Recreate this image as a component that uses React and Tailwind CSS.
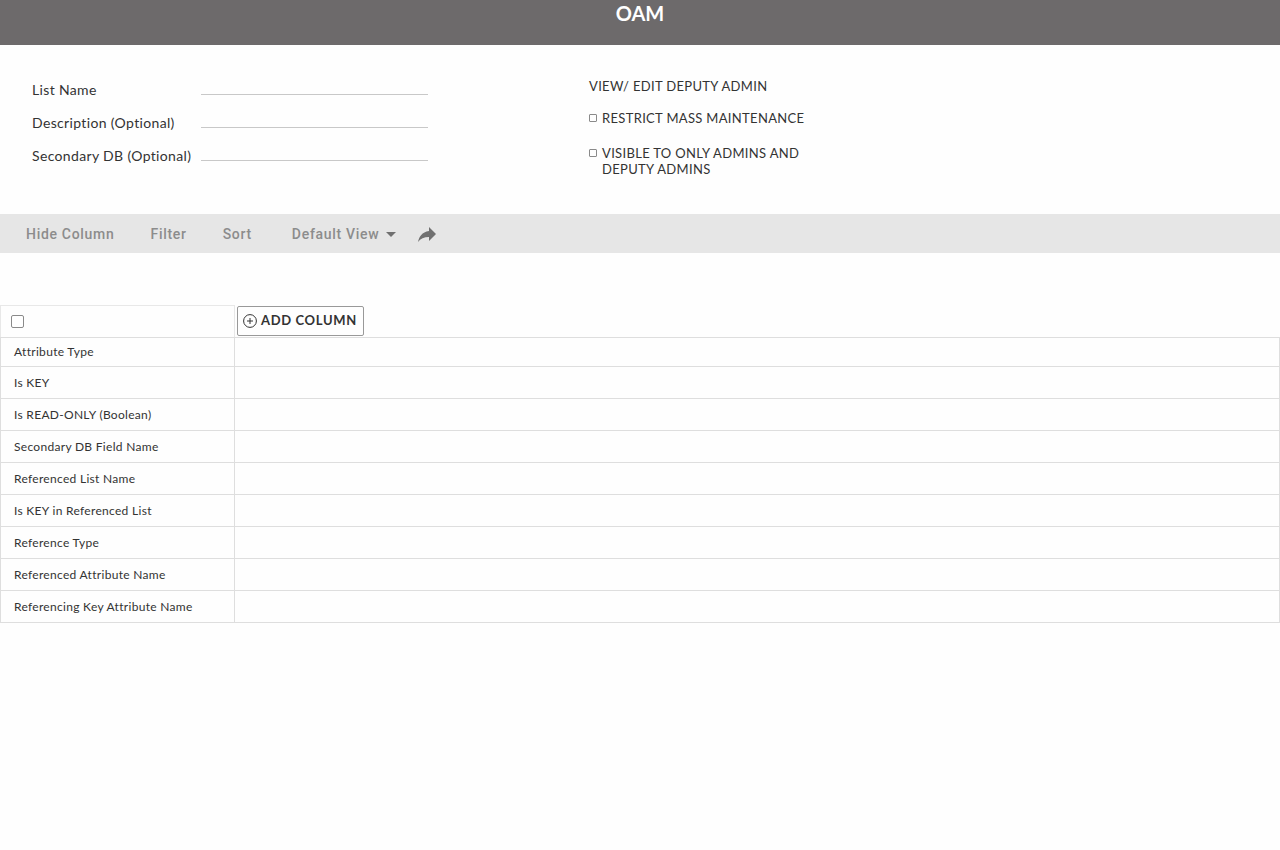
import { MdArrowDropDown, MdReply } from "react-icons/md";

const fields = [
  { id: "list-name", label: "List Name" },
  { id: "description", label: "Description (Optional)" },
  { id: "secondary-db", label: "Secondary DB (Optional)" },
];

const attributes = [
  "Is KEY",
  "Is READ-ONLY (Boolean)",
  "Secondary DB Field Name",
  "Referenced List Name",
  "Is KEY in Referenced List",
  "Reference Type",
  "Referenced Attribute Name",
  "Referencing Key Attribute Name",
];

const AddIcon = () => (
  <svg viewBox="0 0 14 14" className="size-3.5" fill="none" stroke="currentColor" aria-hidden="true">
    <circle cx="7" cy="7" r="6.4" />
    <path d="M7 4v6M4 7h6" />
  </svg>
);

const CheckOption = ({ id, children }) => (
  <div className="flex items-start gap-[5px]">
    <input
      id={id}
      type="checkbox"
      className="mt-1 size-2 shrink-0 appearance-none rounded-[1px] border border-[#8a8a8a] checked:bg-[#6d6a6b]"
    />
    <label htmlFor={id}>{children}</label>
  </div>
);

const ListForm = () => (
  <form className="grid grid-cols-[557px_1fr] px-8 pt-[29px] pb-[37px] text-[#333]">
    <div>
      {fields.map(({ id, label }) => (
        <div key={id} className="flex h-[33px] items-start">
          <label htmlFor={id} className="w-[169px] text-sm leading-8 tracking-wide whitespace-nowrap">
            {label}
          </label>
          <input
            id={id}
            type="text"
            className="h-[21px] w-[227px] border-b border-[#c8c8c8] bg-transparent text-sm outline-none"
          />
        </div>
      ))}
    </div>

    <div className="flex flex-col text-[13px] leading-4 tracking-wide">
      <a href="#deputy-admin" className="mt-1">
        VIEW/ EDIT DEPUTY ADMIN
      </a>
      <div className="mt-4 flex w-60 flex-col gap-[19px]">
        <CheckOption id="restrict">RESTRICT MASS MAINTENANCE</CheckOption>
        <CheckOption id="visible">VISIBLE TO ONLY ADMINS AND DEPUTY ADMINS</CheckOption>
      </div>
    </div>
  </form>
);

const Toolbar = () => (
  <div className="flex h-[39px] items-center bg-[#e6e6e6] px-[26px] font-['Roboto',sans-serif] text-sm font-medium tracking-wider text-[#8c8c8c]">
    <div className="flex gap-9">
      <button type="button">Hide Column</button>
      <button type="button">Filter</button>
      <button type="button">Sort</button>
    </div>
    <button type="button" className="ml-10 flex items-center">
      Default View
      <MdArrowDropDown className="size-6 text-[#707070]" />
    </button>
    <button type="button" aria-label="Share" className="ml-3">
      <MdReply className="size-6 -scale-x-100 text-[#707070]" />
    </button>
  </div>
);

const App = () => {
  return (
    <div className="min-h-screen bg-[#fefefe] font-['Lato',sans-serif]">
      <header className="h-[45px] bg-[#6d6a6b] text-center text-white">
        <h1 className="text-xl leading-[26px] font-bold">OAM</h1>
      </header>

      <main>
        <ListForm />
        <Toolbar />

        <table className="mt-[52px] w-full table-fixed border-collapse text-left text-xs tracking-wide text-[#333]">
          <thead>
            <tr className="h-8">
              <th className="w-[234px] border border-[#e8e8e8] border-b-[#dedede] px-2.5">
                <input
                  type="checkbox"
                  aria-label="Select all"
                  className="block size-[13px] appearance-none rounded-[2px] border border-[#8a8a8a] bg-white checked:bg-[#6d6a6b]"
                />
              </th>
              <th className="border-b border-[#dedede] p-0 pl-0.5 align-top">
                <button
                  type="button"
                  className="flex h-[30px] items-center gap-1 rounded-[2px] border border-[#999] pr-1.5 pl-[5px] text-[13px] font-bold tracking-wider whitespace-nowrap"
                >
                  <AddIcon />
                  ADD COLUMN
                </button>
              </th>
            </tr>
          </thead>
          <tbody>
            <tr className="h-[29px]">
              <th scope="row" className="border border-[#dedede] px-[13px] font-normal">
                Attribute Type
              </th>
              <td className="border border-[#dedede]" />
            </tr>
            {attributes.map((name) => (
              <tr key={name} className="h-8">
                <th scope="row" className="border border-[#dedede] px-[13px] font-normal">
                  {name}
                </th>
                <td className="border border-[#dedede]" />
              </tr>
            ))}
          </tbody>
        </table>
      </main>
    </div>
  );
};

export default App;
